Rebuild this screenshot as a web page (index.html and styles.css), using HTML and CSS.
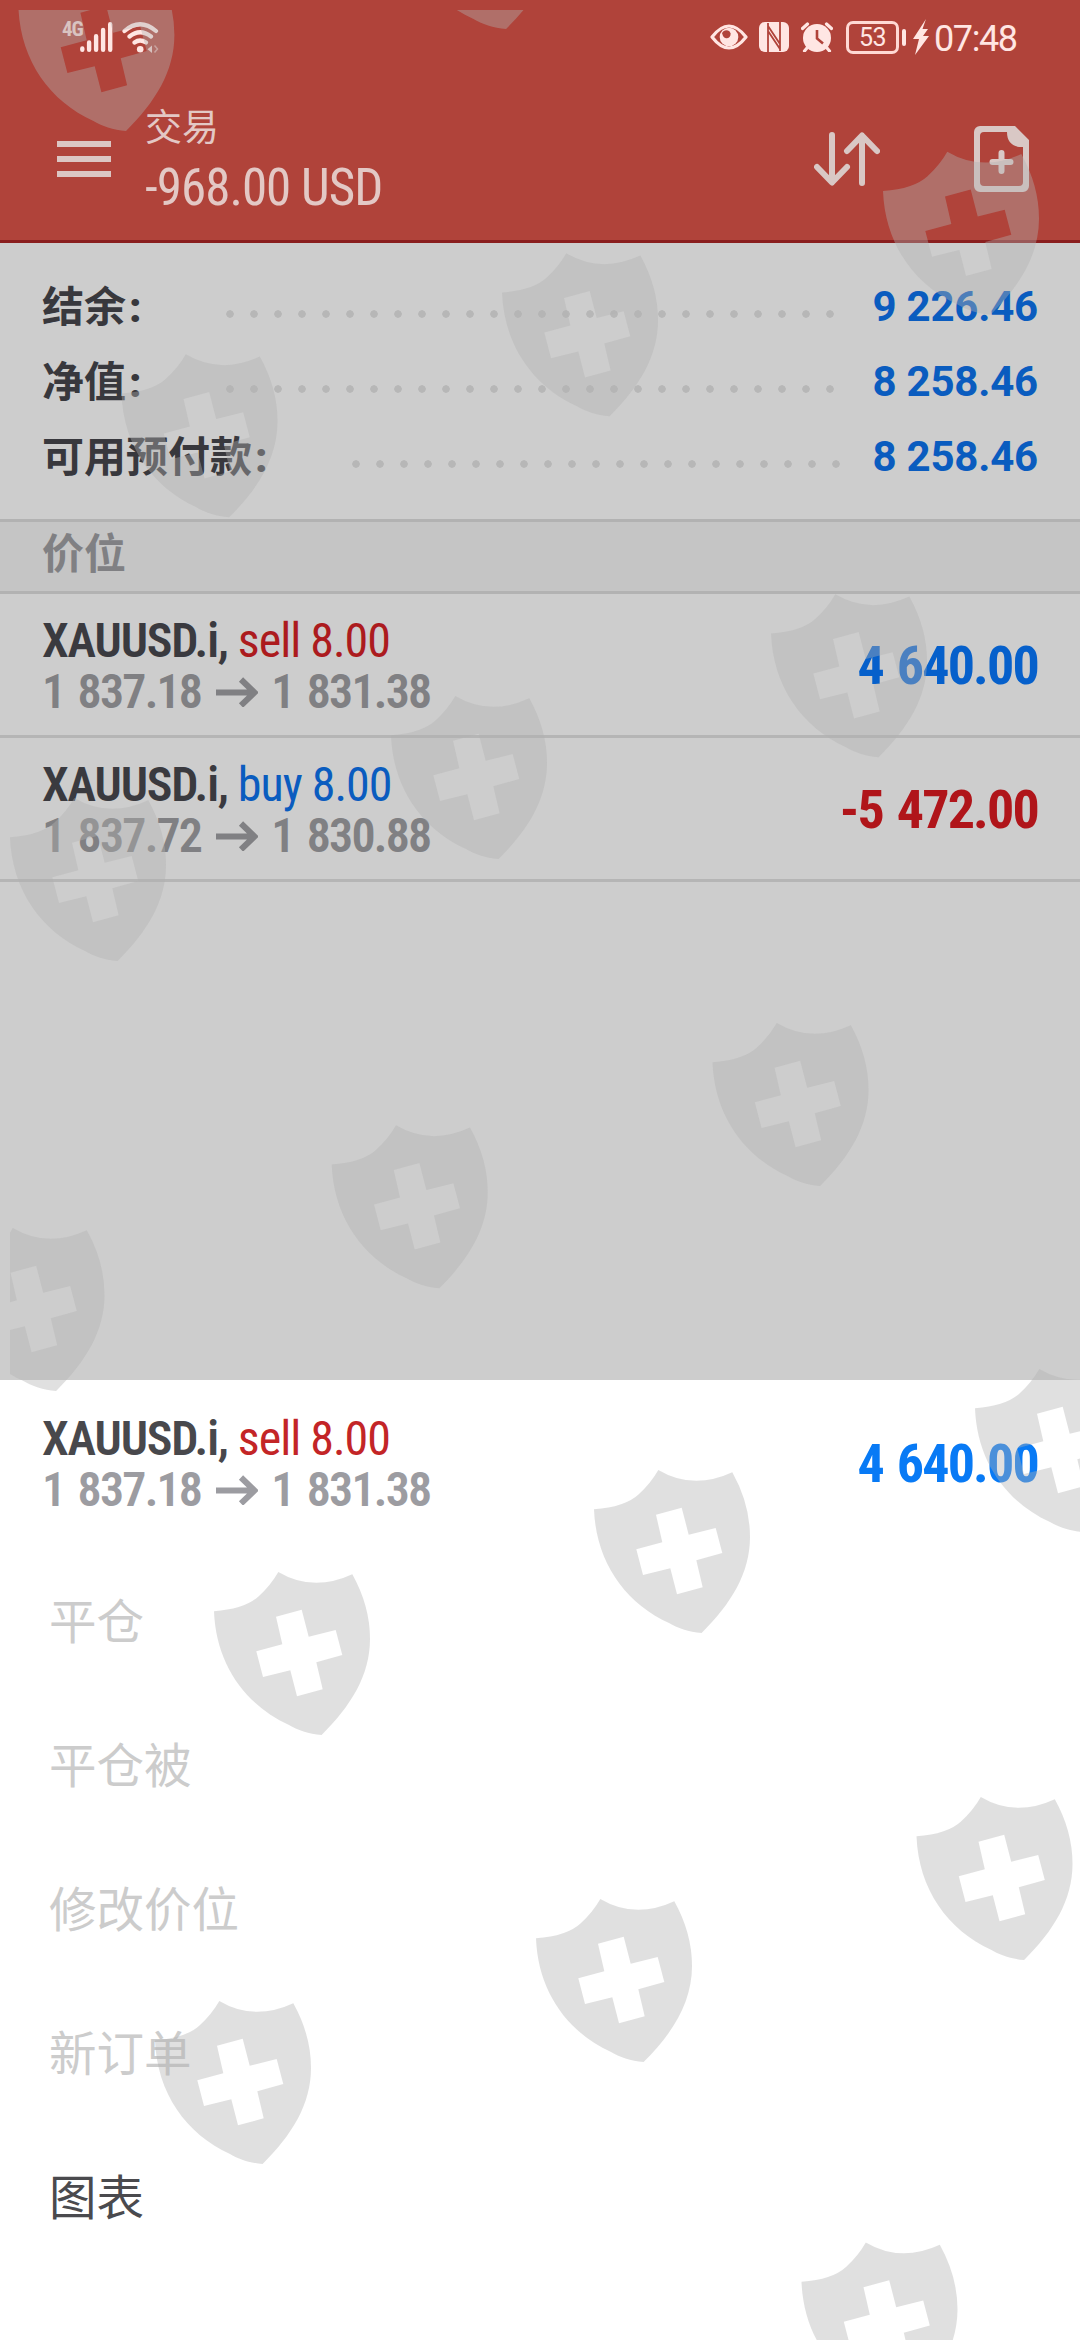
FILE: index.html
```
<!DOCTYPE html>
<html lang="zh-CN">
<head>
<meta charset="utf-8">
<title>交易</title>
<link rel="stylesheet" href="styles.css">
</head>
<body>
<div class="screen">
  <header class="header">
    <div class="status">
      <span class="net">4G</span>
      <svg class="signal" width="33" height="30" viewBox="0 0 33 30"><g stroke="#ffe6e3" stroke-width="4.4" stroke-linecap="round"><path d="M2.3 26.5v1.2M9.1 20.5v7.2M16.1 14.2v13.5M23.1 8v19.7M30.2 2.3v25.4"/></g></svg>
      <svg class="wifi" width="38" height="31" viewBox="0 0 38 31"><g fill="none" stroke="#ffe6e3" stroke-width="4.2" stroke-linecap="round"><path d="M2.5 9Q18 -4.500 34 9M7.500 14.500Q18 6 29 14.500M12.500 20.500Q18 16.500 24 20.500"/></g><circle cx="18.200" cy="27.300" r="3.300" fill="#ffe6e3"/><path d="M25.500 27.200l4.500-3.700v7.400z" fill="#f0cdc9"/><path d="M32.500 23.500l3 3.500-3 3.500" fill="none" stroke="#d79a93" stroke-width="1.500"/></svg>
      <div class="status-right">
        <svg class="eye" width="38" height="26" viewBox="0 0 38 26"><path d="M2 13Q19-9 36 13Q19 35 2 13z" fill="none" stroke="#ffe6e3" stroke-width="3.200" stroke-linejoin="round"/><circle cx="19" cy="13" r="9.300" fill="#ffe6e3"/><path d="M12 9a5 5 0 0 1 6-2.500a4 4 0 1 1-5 5.500z" fill="#b0433a"/></svg>
        <svg class="nfc" width="30" height="30" viewBox="0 0 30 30"><rect width="30" height="30" rx="6" fill="#ffe6e3"/><path d="M9 30V1M21 0v29M9 4l12 18M9 9l12 18" fill="none" stroke="#b0433a" stroke-width="1.800"/></svg>
        <svg class="alarm" width="32" height="30" viewBox="0 0 32 30"><circle cx="16" cy="16" r="14" fill="#ffe6e3"/><path d="M1.500 6.500L6.500 2M30.500 6.500L25.500 2M6 26l-2.500 3M26 26l2.500 3" stroke="#ffe6e3" stroke-width="3.200" stroke-linecap="round"/><path d="M16 8v8.500l6 5" fill="none" stroke="#b0433a" stroke-width="2.600"/></svg>
        <span class="battery">53</span><i class="battery-cap"></i>
        <svg class="bolt" width="16" height="36" viewBox="0 0 16 36"><path d="M13 0L0 20h6L2 36L16 17H10L15 10H9.500z" fill="#ffe6e3"/></svg>
        <time class="time">07:48</time>
      </div>
    </div>
    <div class="toolbar">
      <svg class="menu" width="54" height="36" viewBox="0 0 54 36"><path d="M0 3h54M0 18h54M0 33h54" stroke="#dcc6c3" stroke-width="6"/></svg>
      <div class="heading">
        <h1 class="title">交易</h1>
        <div class="profit">-968.00 USD</div>
      </div>
      <svg class="sort" width="66" height="54" viewBox="0 0 66 54"><path d="M18 3v47M3 35l15 15.500L33 35M48 51V4M33 19L48 3.500L63 19" fill="none" stroke="#d9c8c5" stroke-width="6" stroke-linecap="round" stroke-linejoin="round"/></svg>
      <svg class="new-order" width="55" height="66" viewBox="0 0 55 66"><path fill-rule="evenodd" d="M6 0H41L55 14V60a6 6 0 0 1-6 6H6a6 6 0 0 1-6-6V6a6 6 0 0 1 6-6zM10 6a4 4 0 0 0-4 4V56a4 4 0 0 0 4 4H45a4 4 0 0 0 4-4V21H45Q33 19 33 6z" fill="#d9c8c5"/><path d="M27.500 27v18M18.500 36h18" stroke="#d9c8c5" stroke-width="6" stroke-linecap="round"/></svg>
    </div>
  </header>

  <section class="summary">
    <div class="line"><span class="label">结余<b>:</b></span><i class="dots"></i><span class="value">9 226.46</span></div>
    <div class="line"><span class="label">净值<b>:</b></span><i class="dots"></i><span class="value">8 258.46</span></div>
    <div class="line"><span class="label label-long">可用预付款<b>:</b></span><i class="dots dots-short"></i><span class="value">8 258.46</span></div>
  </section>

  <h2 class="section-title">价位</h2>

  <main class="positions">
    <div class="position">
      <div><div class="symbol">XAUUSD.i, <span class="side sell">sell 8.00</span></div><div class="prices"><span>1 837.18</span><svg width="42" height="30" viewBox="0 0 42 30"><path d="M0 15.500h37M25 2.500L38.500 15.500L25 28.500" fill="none" stroke="currentColor" stroke-width="6"/></svg><span>1 831.38</span></div></div>
      <div class="amount up">4 640.00</div>
    </div>
    <div class="position">
      <div><div class="symbol">XAUUSD.i, <span class="side buy">buy 8.00</span></div><div class="prices"><span>1 837.72</span><svg width="42" height="30" viewBox="0 0 42 30"><path d="M0 15.500h37M25 2.500L38.500 15.500L25 28.500" fill="none" stroke="currentColor" stroke-width="6"/></svg><span>1 830.88</span></div></div>
      <div class="amount down">-5 472.00</div>
    </div>
  </main>

  <section class="sheet">
    <div class="position">
      <div><div class="symbol">XAUUSD.i, <span class="side sell">sell 8.00</span></div><div class="prices"><span>1 837.18</span><svg width="42" height="30" viewBox="0 0 42 30"><path d="M0 15.500h37M25 2.500L38.500 15.500L25 28.500" fill="none" stroke="currentColor" stroke-width="6"/></svg><span>1 831.38</span></div></div>
      <div class="amount up">4 640.00</div>
    </div>
    <ul class="actions">
      <li>平仓</li>
      <li>平仓被</li>
      <li>修改价位</li>
      <li>新订单</li>
      <li class="enabled">图表</li>
    </ul>
  </section>

  <svg class="watermark" width="1070" height="2330" viewBox="10 10 1070 2330">
    <defs><path id="shield" fill-rule="evenodd" d="M0 39.300Q31 37 44.500 24.500Q57 13 64.300 0Q99 20.500 138.300 2.300Q156 34 156 67C156 103 137 134 107.600 163C95 162 83 158 75 153C31 133 2 92 0 39.300zM62 44.700L87.700 37.700L94.700 64.700L121.700 58L128.300 83L102.300 90.300L108.700 117.300L83 124.300L76.300 98.300L49 105L42.300 79.300L68.300 72.300z"/></defs>
    <g fill="#b1b1b1" fill-opacity=".4">
      <use href="#shield" x="18.400" y="-32"/><use href="#shield" x="398.500" y="-134"/>
      <use href="#shield" x="883" y="151.700"/><use href="#shield" x="502" y="253.300"/><use href="#shield" x="121.500" y="354.300"/>
      <use href="#shield" x="771" y="594.300"/><use href="#shield" x="391" y="696"/><use href="#shield" x="10" y="798"/>
      <use href="#shield" x="712.500" y="1023"/><use href="#shield" x="331.700" y="1125.300"/><use href="#shield" x="-51.500" y="1228"/>
      <use href="#shield" x="975" y="1369"/><use href="#shield" x="594" y="1470"/><use href="#shield" x="214" y="1572"/>
      <use href="#shield" x="916.500" y="1797"/><use href="#shield" x="536" y="1899"/><use href="#shield" x="155" y="2001"/>
      <use href="#shield" x="801.500" y="2242.500"/>
    </g>
  </svg>
</div>
</body>
</html>
```

FILE: styles.css
```
* { box-sizing: border-box; }
body, h1, h2, ul { margin: 0; padding: 0; }
body { background: #fff; font-family: Roboto, "Noto Sans CJK SC", sans-serif; }
svg { display: block; flex: none; }
.screen { position: relative; width: 1080px; height: 2340px; overflow: hidden; display: flex; flex-direction: column; background: #cdcdcd; }

.header { height: 243px; background: #b0433a; border-bottom: 3px solid #8a1e1e; }
.status { height: 78px; display: flex; align-items: center; padding: 0 62px 4px; color: #ffe6e3; }
.net { width: 18px; margin-top: -16px; font: 700 21px/20px "Roboto Condensed", sans-serif; letter-spacing: -1px; color: #f3cfcb; }
.wifi { margin-left: 9px; }
.status-right { margin-left: auto; display: flex; align-items: center; }
.nfc { margin-left: 11px; }
.alarm { margin-left: 12px; }
.battery { width: 53px; height: 33px; margin-left: 13px; border: 3px solid #ffd9d4; border-radius: 7px; font-size: 25px; line-height: 28px; letter-spacing: -.6px; text-align: center; }
.battery-cap { width: 4px; height: 17px; margin-left: 3px; border-radius: 2px; background: #ffe6e3; }
.bolt { margin-left: 7px; }
.time { width: 84px; margin-left: 5px; font-size: 36px; line-height: 40px; letter-spacing: -1.4px; white-space: nowrap; padding-top: 4px; }

.toolbar { height: 162px; display: flex; align-items: center; padding: 0 51px 0 57px; }
.heading { flex: 1; margin-left: 34px; color: #e3c8c5; }
.title { height: 56px; padding-top: 5px; font-size: 37px; font-weight: 400; line-height: 56px; }
.profit { font: 400 51px/71px "Roboto Condensed", sans-serif; letter-spacing: -.95px; }
.new-order { margin-left: 94px; }

.summary { height: 276px; padding: 26px 42px 0; }
.line { height: 75px; display: flex; align-items: center; }
.label { width: 176px; padding-top: 3px; font-size: 42px; font-weight: 700; line-height: 72px; color: #38383d; }
.label b { margin-left: 3px; }
.label-long { width: 302px; }
.dots { width: 624px; height: 8px; margin-top: 15px; background: radial-gradient(circle, #b7b7b7 3.400px, transparent 4.100px) 0 0 / 24px 8px repeat-x; }
.dots-short { width: 504px; }
.value { margin-left: auto; font-size: 42px; font-weight: 700; line-height: 75px; letter-spacing: -.2px; color: #0a5cbf; white-space: nowrap; }

.section-title { height: 75px; padding-left: 42px; border: solid #b2b2b2; border-width: 3px 0; background: #c5c5c5; font-size: 42px; font-weight: 700; line-height: 66px; color: #808083; }

.position { height: 144px; padding: 21px 42px 18px; border-bottom: 3px solid #b5b5b5; display: flex; align-items: center; justify-content: space-between; font-family: "Roboto Condensed", sans-serif; white-space: nowrap; }
.symbol { font-size: 48px; line-height: 51px; font-weight: 600; letter-spacing: -1.15px; color: #3a3a3f; }
.side { font-weight: 400; letter-spacing: -1px; }
.sell { color: #ac1b1e; }
.buy { color: #0a5cbf; }
.prices { display: flex; align-items: center; font-size: 48px; line-height: 51px; font-weight: 600; letter-spacing: -1.8px; word-spacing: 4px; color: #808083; }
.prices svg { margin: 0 13.5px 0 14.5px; }
.amount { font-size: 54px; line-height: 102px; font-weight: 700; letter-spacing: -1.8px; word-spacing: 3px; }
.up { color: #0660cb; }
.down { color: #b0151a; }

.sheet { position: absolute; left: 0; right: 0; top: 1380px; bottom: 0; padding-top: 12px; background: #fff; }
.sheet .position { border-color: transparent; }
.sheet .symbol { color: #48484c; }
.sheet .sell { color: #c32527; }
.sheet .prices { color: #9c9ca1; }
.sheet .up { color: #087af5; }
.actions { list-style: none; padding: 15px 49px 0; font-size: 47.500px; line-height: 144px; color: #ccc; }
.enabled { color: #4a4a4e; }

.watermark { position: absolute; left: 10px; top: 10px; pointer-events: none; }
```
